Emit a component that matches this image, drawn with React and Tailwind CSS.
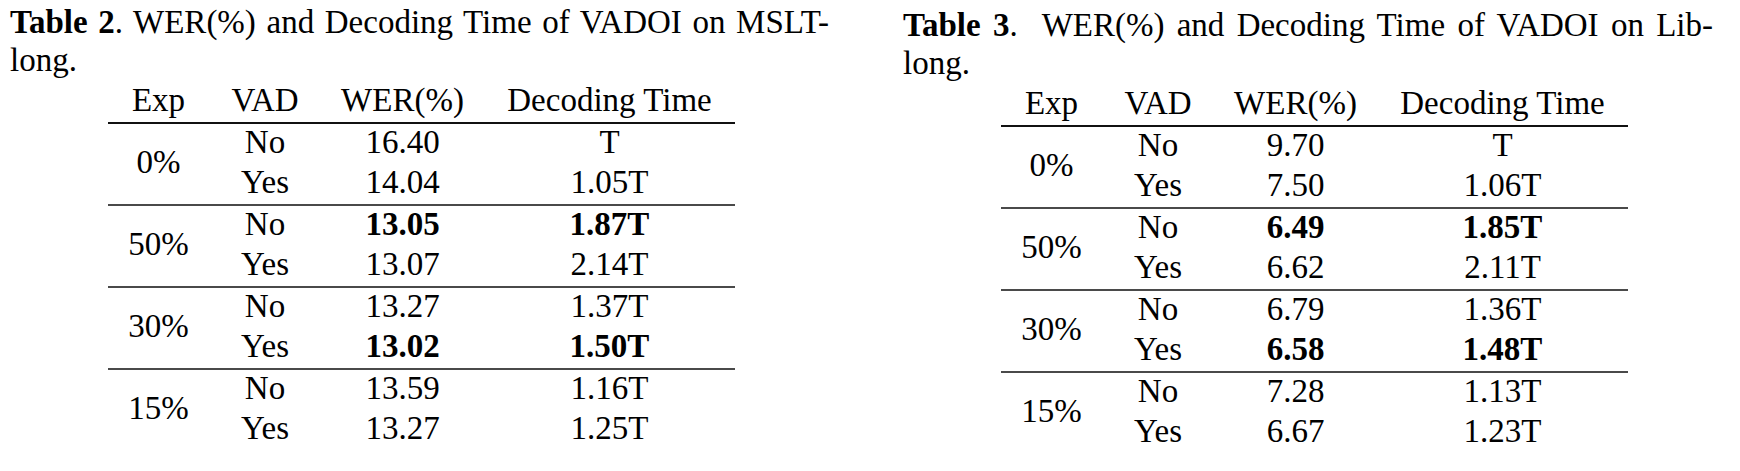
const tables = [
  {
    label: "Table 2",
    rest: ". WER(%) and Decoding Time of VADOI on MSLT-",
    captionWidth: "w-[819px]",
    shift: "pt-[3px]",
    groups: [
      { exp: "0%", rows: [["No", "16.40", "T"], ["Yes", "14.04", "1.05T"]] },
      { exp: "50%", rows: [["No", "13.05", "1.87T", true], ["Yes", "13.07", "2.14T"]] },
      { exp: "30%", rows: [["No", "13.27", "1.37T"], ["Yes", "13.02", "1.50T", true]] },
      { exp: "15%", rows: [["No", "13.59", "1.16T"], ["Yes", "13.27", "1.25T"]] },
    ],
  },
  {
    label: "Table 3",
    rest: ".  WER(%) and Decoding Time of VADOI on Lib-",
    captionWidth: "w-[810px]",
    shift: "pt-[6px]",
    groups: [
      { exp: "0%", rows: [["No", "9.70", "T"], ["Yes", "7.50", "1.06T"]] },
      { exp: "50%", rows: [["No", "6.49", "1.85T", true], ["Yes", "6.62", "2.11T"]] },
      { exp: "30%", rows: [["No", "6.79", "1.36T"], ["Yes", "6.58", "1.48T", true]] },
      { exp: "15%", rows: [["No", "7.28", "1.13T"], ["Yes", "6.67", "1.23T"]] },
    ],
  },
];

const cols = "grid grid-cols-[101px_112px_163px_251px]";

const Table = ({ t }) => {
  return (
    <div className={t.shift}>
      {/* caption, justified like the LaTeX output */}
      <div className={`${t.captionWidth} leading-[38px] text-justify [text-align-last:justify] whitespace-pre-wrap`}>
        <span className="font-bold">{t.label}</span>
        {t.rest}
      </div>
      <div className="leading-[38px]">long.</div>

      <div className="ml-[98px] w-[627px]">
        <div className={`${cols} h-[43px] leading-[42px] text-center`}>
          <div>Exp</div>
          <div>VAD</div>
          <div>WER(%)</div>
          <div>Decoding Time</div>
        </div>
        {t.groups.map((g, i) => (
          <div
            key={g.exp}
            className={`${cols} grid-rows-[40px_40px] border-t-2 leading-[36px] text-center ${
              i === 0 ? "border-[#111]" : "border-[#4a4a4a]"
            }`}
          >
            <div className="row-span-2 flex items-center justify-center pb-[4px]">{g.exp}</div>
            {g.rows.map((r) => (
              <div key={r[0]} className="contents">
                <div>{r[0]}</div>
                <div className={r[3] ? "font-bold" : ""}>{r[1]}</div>
                <div className={r[3] ? "font-bold" : ""}>{r[2]}</div>
              </div>
            ))}
          </div>
        ))}
      </div>
    </div>
  );
};

export default function App() {
  return (
    <div className="w-[1740px] h-[471px] bg-white text-black font-['Liberation_Serif',serif] text-[33px] flex overflow-hidden">
      <div className="pl-[10px] w-[903px]">
        <Table t={tables[0]} />
      </div>
      <div>
        <Table t={tables[1]} />
      </div>
    </div>
  );
}
